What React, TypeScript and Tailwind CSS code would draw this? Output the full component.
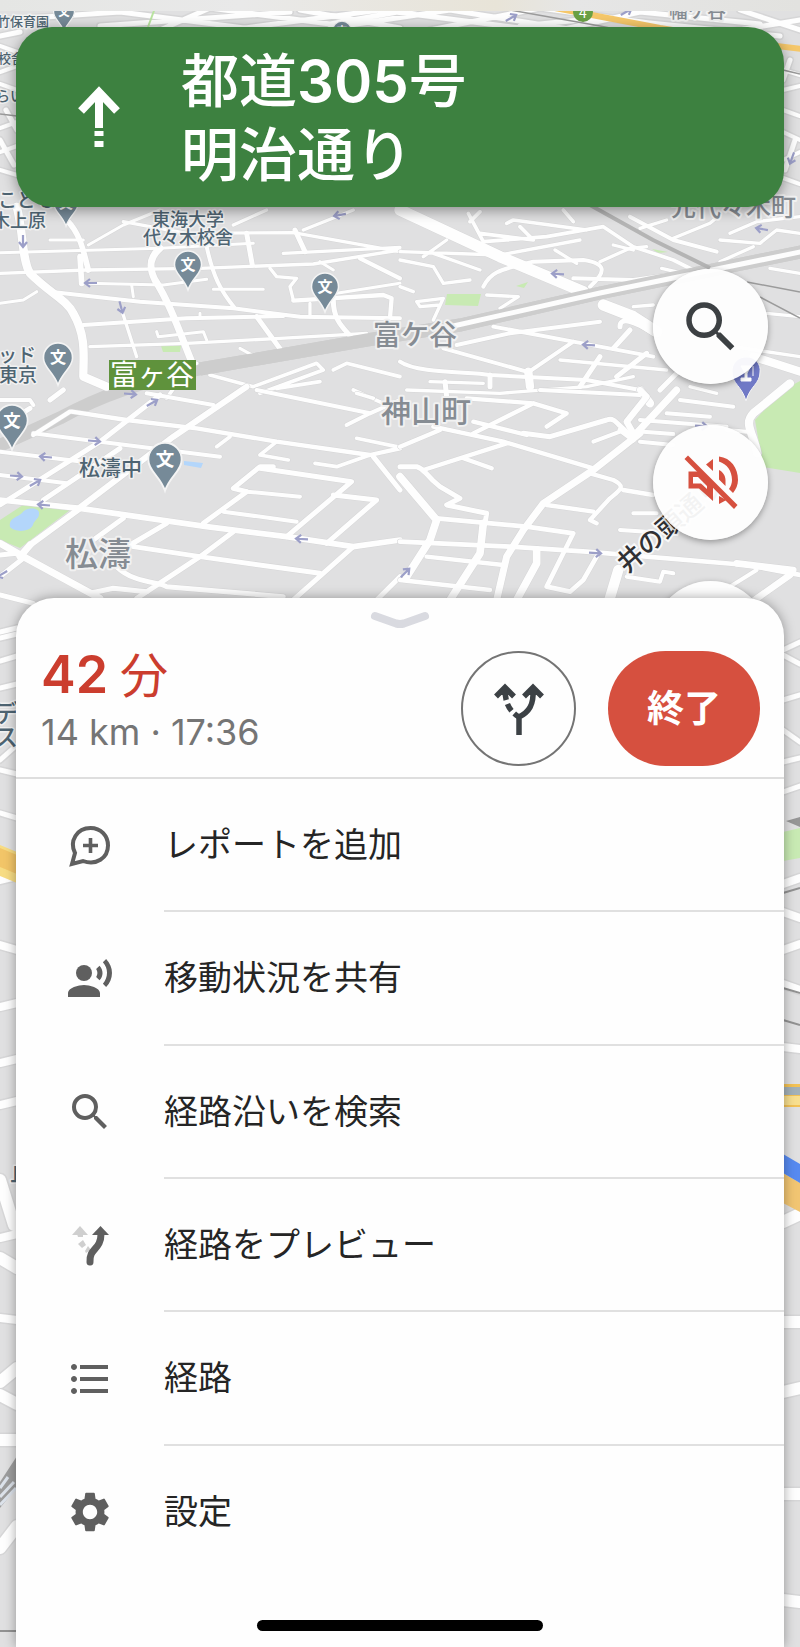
import React from "react";
import {
  MdFormatListBulleted,
  MdRecordVoiceOver,
  MdSearch,
  MdSettings,
} from "react-icons/md";

type Road = [width: number, d: string];

const northWest: Road[] = [
  [25, "M50 50C70 120 65 210 90 250C150 310 200 330 220 370C260 440 250 500 250 560L320 590"],
  [17, "M200 90C240 130 250 180 265 240M240 200L245 280"],
  [21, "M480 175C450 200 445 230 465 270C510 340 540 430 575 515"],
  [9, "M0 188L480 175L760 160M150 150H250M265 165L370 105L480 60M260 280L490 285L620 268"],
  [10, "M0 250L260 240L600 235L940 222L1200 180M270 470L560 460L840 445L1100 430M365 360L410 500"],
  [12, "M150 305L420 335L700 355L900 380L1200 385M620 170C640 260 660 300 705 355M250 405L560 385L850 378"],
  [15, "M740 130L757 225M770 380L850 490M885 120L915 185M1000 330C1000 400 1040 420 1060 450"],
  [10, "M370 95L560 130L880 128L1200 185M700 105L800 60M910 120L1060 60M850 190L1200 172M930 340V380M810 235L830 260L890 265L870 290L880 330"],
  [13, "M1080 205L1200 265M880 332L1150 315L1175 325L1170 385"],
  [9, "M640 298H790M470 425L475 440L610 425L620 450M395 285L400 320M720 475L765 500M600 370V385M1000 240L960 215M1010 310L1200 280M0 340L70 330L110 305"],
  [11, "M630 555L760 590L950 520L970 540L780 610M1000 540L1040 520L1200 560M830 595L960 575M1060 600L1150 640M500 625L560 540M480 540L590 520"],
];

const northEast: Road[] = [
  [34, "M0 60L300 200L550 305M610 345L700 380L770 425"],
  [11, "M205 70L250 155L440 140L610 110L700 170L820 210L880 240M210 95L240 65M240 130L400 150L360 110M320 100L340 90L560 120M490 60L520 95"],
  [10, "M0 185L300 195L540 150M70 200L140 150M100 190L240 240M130 280L210 270M100 230L130 280M0 210L100 230"],
  [12, "M250 290C270 250 290 240 400 215L550 210C620 220 620 245 570 290M520 265L700 270L840 250M690 80L820 150L950 185"],
  [10, "M600 215L690 175L740 170M820 145L930 100L960 75M720 115L800 90M960 150L1080 160L1130 120L1200 130M960 215L1060 170M1110 235L1200 250M990 130L1070 95L1200 80"],
  [10, "M0 290L40 305M60 350L50 335L130 325L100 390M60 350L120 345M260 315L355 320L300 355M785 235L850 250M465 180L530 220M640 165L700 180"],
  [12, "M280 410L520 455L760 500M170 465L330 430L600 395M380 550L520 455M130 475L380 545M0 515C50 550 200 545 270 555L560 570L720 600"],
  [15, "M270 555V590M135 575L140 620M640 475L690 420M660 410C660 380 700 390 760 430M540 590L600 500M650 560L740 490M780 600L830 550"],
  [25, "M385 545L390 590M720 600L750 640M1060 500L1200 545"],
  [10, "M480 510L800 540M20 600L300 610L560 590L700 560M90 575L250 580M1000 470L1200 500M1100 370L1200 380M700 350L760 345M870 590L950 610"],
];

const southWest: Road[] = [
  [17, "M0 330L240 355L620 410L860 440L1060 470L1200 450"],
  [15, "M0 345L300 155L480 15M130 330L360 175M0 110L90 55M150 30L190 0"],
  [18, "M230 360L520 140L740 -10M90 465L240 355"],
  [13, "M215 65L380 90L590 115L830 155L1110 195L1200 175M210 65L100 135"],
  [12, "M100 130L300 155L660 200M0 185L250 215M0 255L200 280M440 10L640 45M0 30H90L100 45"],
  [11, "M690 140L650 170M830 155L780 195L865 210M1110 195L1010 230L945 220M1070 145L1190 170M1070 10L1120 25"],
  [15, "M1120 200L1200 300M820 230H780L700 295L740 305M780 235L1055 275L860 440M1000 315L1130 330L980 460M740 305L610 400"],
  [12, "M740 305L900 320M670 365L890 395M770 0L1110 70L1040 105M1110 70L1200 30"],
  [15, "M370 385L280 450M500 400L390 465M700 425L600 500L410 625M400 470L600 500L960 550M1060 470L880 630M350 530C400 580 480 575 500 590L850 620"],
  [21, "M0 460L70 500L300 625M60 500L90 465"],
  [15, "M70 505L0 560M0 495L50 490M270 610L340 595L440 605M0 615L100 640M1200 560L1130 630"],
];

const southEast: Road[] = [
  [23, "M0 260L110 390L90 450L20 560M250 400L240 490L150 630M410 480V520L350 630"],
  [15, "M0 230H50C80 240 70 250 120 290L180 325L140 345L260 370L255 400"],
  [14, "M110 385L380 410L520 430L490 490L440 590L510 605L550 570L590 500M0 455L330 470L560 485L1040 525L1200 555"],
  [21, "M720 130L580 240L430 340L370 420L320 500L290 630M830 0L700 140"],
  [13, "M80 500L310 525M0 570L270 600M70 240L320 160M100 110L310 155L580 235M120 120L0 170M190 205L275 235M220 130L400 40M200 25L400 40L500 70L440 110M220 95L380 135"],
  [15, "M370 130L450 140L620 90C650 80 650 110 700 140M660 120L700 150"],
  [19, "M720 0L740 20L680 95L700 130"],
  [12, "M420 0L720 15M720 90L980 110M730 125L820 132M720 155L820 165M800 70L930 80M840 30L1000 50M580 155L660 125M980 120L1040 125"],
  [13, "M570 250L640 270C680 290 660 300 630 325L570 390M670 300L760 315M440 345L580 365M570 390L590 400"],
  [31, "M655 540L625 640"],
  [12, "M680 560L780 575L790 545L820 550M990 590L1070 540M700 370H770M660 420L740 425"],
  [20, "M1050 640L1170 555M1010 520L1180 540"],
  [25, "M1170 -20L1060 70C1030 100 1060 130 1072 190"],
];

const topStrip: Road[] = [
  [5, "M0 20L120 12L260 30M100 26L290 12M160 30L210 8L330 24L420 8M230 30L380 10L520 28M330 28L450 10L600 34M430 30L540 8L700 30M520 26L600 18L780 36M640 12L760 24M0 36L20 32M690 38L800 20M740 10L800 30M300 10L400 28M560 30L640 12"],
  [4, "M0 46L17 52M0 72L17 66M0 84L17 90M0 128L17 122M0 152L17 146M0 170L17 175M783 70L800 75M783 90L800 86M783 110L800 116M783 132L800 140M783 160L800 152M783 178L800 184"],
  [5, "M6 110L17 130M0 140L14 165M790 60L783 80M795 140L785 170"],
];

const sides: Road[] = [
  [5, "M0 632L17 628M0 638L17 634M0 661L17 656M0 688L17 684M0 770L17 774M0 813L17 818M0 760L17 745M783 650L800 642M783 655L800 664M783 700L800 695M783 730L800 742M783 762L800 758M783 792L800 786"],
  [8, "M0 945L17 950M0 1007L17 1003M0 1063L17 1059M0 1105L17 1101M0 1238L17 1234M0 1318L17 1320M783 884L800 878M783 912L800 918M783 950L800 944M783 984L800 990M783 1047L800 1049"],
  [12, "M0 1180L14 1225M0 1258L17 1268M0 1382L17 1368M0 1395L17 1404M0 1440H17M0 1548L17 1526M783 1322H800M783 1392L800 1388M783 1494H800M783 1600L800 1602M0 878L17 874M783 1222L800 1214"],
];

function Roads({ roads, transform }: { roads: Road[]; transform?: string }) {
  return (
    <g transform={transform} fill="none" strokeLinejoin="round" strokeLinecap="round">
      {roads.map(([w, d], i) => (
        <path key={`edge${i}`} d={d} stroke="#d6d6d7" strokeWidth={w + 3} />
      ))}
      {roads.map(([w, d], i) => (
        <path key={`road${i}`} d={d} stroke="#fefefe" strokeWidth={w} />
      ))}
    </g>
  );
}

function SchoolPin({ x, y, r = 13 }: { x: number; y: number; r?: number }) {
  return (
    <g transform={`translate(${x} ${y}) scale(${r / 13})`}>
      <path
        d="M0 -14A13.500 13.500 0 0 1 13.500 0C13.500 9 4 13 0 25C-4 13 -13.500 9 -13.500 0A13.500 13.500 0 0 1 0 -14Z"
        fill="#768a98"
        stroke="#f4f4f4"
        strokeWidth="1.500"
      />
      <text y="5" textAnchor="middle" fontSize="15" fontWeight="700" fill="#fff">
        文
      </text>
    </g>
  );
}

const arrows: [number, number, number][] = [
  [340, 215, 170], [23, 241, 90], [91, 283, 180], [121, 307, 75], [130, 394, 5], [152, 403, -30],
  [94, 441, 5], [46, 457, 185], [16, 476, 5], [35, 483, -30], [44, 505, 185], [302, 539, 183],
  [2, 574, 150], [558, 274, 183], [589, 345, 183], [762, 229, 190], [595, 553, 4], [405, 573, -45],
  [701, 426, 4], [792, 158, 110], [511, 18, -30], [626, 12, -30],
];

type Label = [text: string, x: number, y: number, size: number, anchor?: "start" | "middle" | "end"];

const placeLabels: Label[] = [
  ["東海大学", 188, 226, 18, "middle"],
  ["代々木校舎", 188, 244, 18, "middle"],
  ["こども", -2, 207, 19],
  ["木上原", 46, 227, 18, "end"],
  ["ッド", 36, 362, 19, "end"],
  ["東京", 37, 382, 19, "end"],
  ["松濤中", 79, 475, 21],
  ["竹保育園", 49, 26, 13, "end"],
  ["校舎", -2, 63, 13],
  ["らい", -4, 101, 14],
  ["デ", -6, 722, 24],
  ["ス", -6, 746, 24],
  ["止", 10, 1181, 24],
];

const districtLabels: Label[] = [
  ["富ケ谷", 373, 345, 28],
  ["神山町", 381, 422, 30],
  ["松濤", 65, 566, 33],
  ["元代々木町", 671, 216, 25],
  ["幡ケ谷", 669, 18, 19],
];

function MapBackdrop() {
  return (
    <svg
      className="absolute inset-0 h-full w-full font-['Noto_Sans_CJK_JP',sans-serif]"
      viewBox="0 0 800 1647"
      preserveAspectRatio="xMidYMin slice"
      aria-label="地図"
    >
      <defs>
        <linearGradient id="statusHaze">
          <stop offset="0" stopColor="#e5e6e4" />
          <stop offset=".3" stopColor="#e9e9e9" />
          <stop offset=".62" stopColor="#e8e4d8" />
          <stop offset=".72" stopColor="#e6e6e6" />
          <stop offset="1" stopColor="#e2e2df" />
        </linearGradient>
      </defs>
      <rect width="800" height="1647" fill="#e0e0e1" />

      <g fill="#c8eab3">
        <path d="M161 346L181 345L180 352H163Z" />
        <path d="M447 294L481 294L478 306L445 305ZM516 286L528 282L524 288ZM652 249L668 252L658 253Z" />
        <path d="M0 520L23 505L70 510L20 548L0 540Z" />
        <path d="M755 420L783 390L800 381V473L763 467Z" />
        <path d="M783 832L800 828V858L783 861Z" />
      </g>
      <path d="M10 527C8 518 18 517 22 513C26 507 40 507 39 514C39 519 34 520 33 525C29 533 14 532 10 527ZM184 461L203 463L201 468L184 465Z" fill="#b3d6fb" />

      <path d="M-10 450L60 418Q120 385 200 369L367 340L460 325L600 293L810 250" fill="none" stroke="#cdcdcd" strokeWidth="13" />
      <Roads roads={northWest} transform="translate(0 190) scale(.3333)" />
      <Roads roads={northEast} transform="translate(400 190) scale(.3333)" />
      <Roads roads={southWest} transform="translate(0 390) scale(.3333)" />
      <Roads roads={southEast} transform="translate(400 390) scale(.3333)" />
      <Roads roads={topStrip} />
      <Roads roads={sides} />

      <g fill="none">
        <path d="M200 369L367 340L460 325L600 293L810 250" stroke="#cdcdcd" strokeWidth="13" />
        <path d="M440 329L600 293L810 250" stroke="#fdfdfd" strokeWidth="5" />
        <path d="M590 205L653 240L710 268" stroke="#b4b4b4" strokeWidth="4" />
        <path d="M747 282L800 292M760 297L800 318M510 10L600 26L650 36M0 114L17 116M783 70L800 74" stroke="#9b9b9b" strokeWidth="1.500" />
        <path d="M555 8L660 28L760 44L810 50" stroke="#f5c76a" strokeWidth="6" />
        <path d="M155 8L148 27" stroke="#b9e3a0" strokeWidth="2" />
        <path d="M783 893L800 888M783 988L800 993M783 1020L800 1025M0 1631H17" stroke="#929292" strokeWidth="2" />
      </g>
      <path d="M0 845L17 852V883L0 876Z" fill="#f7dc83" />
      <path d="M0 848L17 855V874L0 867Z" fill="#f2c568" />
      <path d="M0 1482L17 1456V1487L0 1508Z" fill="#9d9d9d" />
      <path d="M0 1488L8 1477M0 1497L14 1482M0 1505L16 1488" stroke="#dce2ea" strokeWidth="3" />
      <path d="M786 821L800 817V827Z" fill="#969696" />
      <path d="M783 1084H800V1107H783Z" fill="#f3c255" />
      <path d="M783 1087H800V1095H783Z" fill="#a3b1b9" />
      <path d="M783 1096H800V1105H783Z" fill="#f8df8f" />
      <path d="M783 1173L800 1183V1212L783 1203Z" fill="#f1c572" />
      <path d="M783 1154L800 1164V1183L783 1173Z" fill="#578af0" />

      {arrows.map(([x, y, a], i) => (
        <path
          key={i}
          transform={`translate(${x} ${y}) rotate(${a})`}
          d="M-6 0H5M1 -4L6 0L1 4"
          fill="none"
          stroke="#9c9fc8"
          strokeWidth="2.200"
        />
      ))}

      <SchoolPin x={64} y={12} r={10} />
      <SchoolPin x={342} y={31} r={9} />
      <SchoolPin x={66} y={203} r={12} />
      <SchoolPin x={188} y={265} />
      <SchoolPin x={325} y={287} />
      <SchoolPin x={58} y={358} r={14} />
      <SchoolPin x={12} y={421} r={15} />
      <SchoolPin x={165} y={460} r={16} />
      <path d="M747 357A13 13 0 0 1 760 372C760 384 750 386 746 401C742 386 732 384 732 372A14 14 0 0 1 747 357Z" fill="#7079c6" stroke="#f4f4f4" />
      <path d="M741 366H751L747 373V378H751V381H741V378H745V373ZM753 366V376" fill="#fff" stroke="#fff" />
      <circle cx="583" cy="12" r="10" fill="#69a044" />
      <text x="583" y="18" textAnchor="middle" fontSize="14" fill="#fff">4</text>

      <g fontWeight="500" fill="#4e6472" stroke="#f1f1f1" strokeWidth="3" strokeLinejoin="round" paintOrder="stroke">
        {placeLabels.map(([t, x, y, s, a]) => (
          <text key={t} x={x} y={y} fontSize={s} textAnchor={a}>{t}</text>
        ))}
      </g>
      <g fontWeight="500" fill="#868c93" stroke="#f1f1f1" strokeWidth="4" strokeLinejoin="round" paintOrder="stroke">
        {districtLabels.map(([t, x, y, s, a]) => (
          <text key={t} x={x} y={y} fontSize={s} textAnchor={a}>{t}</text>
        ))}
      </g>
      <rect x="109" y="360" width="87" height="30" fill="#5f923c" />
      <text x="152" y="385" textAnchor="middle" fontSize="28" fill="#fff">富ヶ谷</text>
      <text
        transform="translate(627 574) rotate(-41)"
        fontSize="26"
        fontWeight="500"
        fill="#303134"
        stroke="#f8f8f8"
        strokeWidth="4"
        paintOrder="stroke"
      >
        井の頭通り
      </text>
      <rect width="800" height="11" fill="url(#statusHaze)" />
    </svg>
  );
}

function StraightArrow() {
  return (
    <svg className="h-16 w-12" viewBox="0 0 48 64" fill="none" stroke="#fff" aria-hidden="true">
      <path d="M24 42V8M6 25L24 6L42 25" strokeWidth="8" />
      <path d="M24 45V50M24 55V61" strokeWidth="9" />
    </svg>
  );
}

function MutedIcon() {
  return (
    <svg className="h-14 w-14" viewBox="0 0 56 56" fill="#d6503f" aria-hidden="true">
      <path fillRule="evenodd" d="M5.500 16.500H16L30 30V46L16 33.500H5.500ZM10 22V28.500H18L24 34V31L15 22Z" />
      <path d="M30 4V16L23 9.500ZM36 15C40 17 42.500 21 42.500 25V31L36 24.500Z" />
      <path d="M36 1.500C48 3 55 13 55 25C55 30 53 34 50 38L46 34C48 31 49 28 49 25C49 16 44 9 36 6.500ZM36 41L43.500 45L36 49Z" />
      <path d="M1.500 4L5 .500L54.500 50L51 54Z" />
    </svg>
  );
}

function AlternateRoutesIcon() {
  return (
    <svg className="h-14 w-14" viewBox="0 0 56 56" fill="none" stroke="#3c4145" aria-hidden="true">
      <path d="M28 54V36C38 31 43 24 42 8" strokeWidth="5.500" />
      <path d="M14 8C14 24 20 31 28 36" strokeWidth="5.500" strokeDasharray="11 4 8 4 9 0" />
      <path d="M5 15.500L14 6.500L23 15.500M33 15.500L42 6.500L51 15.500" strokeWidth="5.500" />
      <path d="M14 5L22 14H6ZM42 5L50 14H34Z" fill="#3c4145" stroke="none" />
    </svg>
  );
}

function AddReportIcon() {
  return (
    <svg className="h-12 w-12" viewBox="0 0 48 48" fill="none" stroke="currentColor" aria-hidden="true">
      <path d="M6 42L9 31C3 19 11 6 24.500 6C35 6 42 14 42 23.500C42 36 30 44 17 39Z" strokeWidth="4" />
      <path d="M24.500 16V31M17 23.500H32" strokeWidth="3.600" />
    </svg>
  );
}

function PreviewIcon() {
  return (
    <svg className="h-12 w-12" viewBox="0 0 48 48" fill="none" aria-hidden="true">
      <path d="M14 4L22 13H6Z" fill="#cfcfcf" />
      <path d="M11 12H17V15H12ZM12 22L17 18L20 23L16 26ZM19 29L22 24L25 28L20 31Z" fill="#cfcfcf" />
      <path d="M24 40C23 26 35 28 35 12" stroke="currentColor" strokeWidth="7" strokeLinecap="round" />
      <path d="M34.500 4L43 13H26Z" fill="currentColor" />
    </svg>
  );
}

const menu = [
  { label: "レポートを追加", icon: <AddReportIcon /> },
  { label: "移動状況を共有", icon: <MdRecordVoiceOver size={48} /> },
  { label: "経路沿いを検索", icon: <MdSearch size={48} /> },
  { label: "経路をプレビュー", icon: <PreviewIcon /> },
  { label: "経路", icon: <MdFormatListBulleted size={48} /> },
  { label: "設定", icon: <MdSettings size={48} /> },
];

const fab =
  "flex h-[115px] w-[115px] shrink-0 items-center justify-center rounded-full bg-[#fefefe]/95 shadow-[0_2px_6px_rgba(0,0,0,0.35)]";

export default function App() {
  return (
    <div className="relative flex min-h-screen flex-col overflow-hidden bg-[#e0e0e1] px-4 pt-[27px] font-['Inter','Noto_Sans_CJK_JP',sans-serif]" lang="ja">
      <MapBackdrop />

      <header className="relative flex items-center rounded-[36px] bg-[#3d8140] pt-[17px] pb-[15px] text-white shadow-[0_3px_14px_rgba(0,0,0,0.4)]">
        <div className="flex w-[165px] justify-center">
          <StraightArrow />
        </div>
        <h1 className="text-[58px] leading-[74px] font-medium">
          都道<span className="font-semibold">305</span>号
          <br />
          明治通り
        </h1>
      </header>

      <div className="relative flex h-[391px] flex-col items-end gap-[41px] pt-[62px] pr-4">
        <button type="button" aria-label="検索" className={fab}>
          <MdSearch size={66} color="#3c4043" />
        </button>
        <button type="button" aria-label="ミュート" className={fab}>
          <MutedIcon />
        </button>
        <button type="button" aria-label="現在地" className={fab} />
      </div>

      <main className="relative flex grow flex-col rounded-t-[38px] bg-[#fefefe] shadow-[0_0_12px_rgba(0,0,0,0.35)]">
        <section className="flex flex-col border-b-2 border-[#dedede] pb-[11px]">
          <button type="button" aria-label="メニューを閉じる" className="mx-auto flex h-[53px] items-start pt-3">
            <svg className="h-5 w-16" viewBox="0 0 64 20" fill="none" aria-hidden="true">
              <path d="M7 6L28 13.500Q32 14.500 36 13.500L57 6" stroke="#d9dae0" strokeWidth="8" strokeLinecap="round" />
            </svg>
          </button>
          <div className="flex items-start pr-6 pl-[25px]">
            <div className="grow">
              <p className="flex items-baseline gap-3 text-[52px] leading-[48px] font-semibold text-[#cb3d2e]">
                42<span className="text-[48px] font-normal">分</span>
              </p>
              <p className="text-[36px] leading-[64px] text-[#757575]">14 km · 17:36</p>
            </div>
            <button type="button" aria-label="別の経路" className="mr-8 flex h-[115px] w-[115px] items-center justify-center rounded-full border-2 border-[#747474]">
              <AlternateRoutesIcon />
            </button>
            <button type="button" className="h-[115px] w-[152px] rounded-full bg-[#d6503f] text-[37px] font-bold text-white">
              終了
            </button>
          </div>
        </section>

        <ul className="flex h-[800px] flex-col">
          {menu.map(({ label, icon }) => (
            <li key={label} className="group flex-1">
              <button type="button" className="flex h-full w-full items-center pl-[50px] text-left text-[#5f5f5f]">
                {icon}
                <span className="ml-[50px] flex h-full grow items-center border-b-2 border-[#e0e0e0] text-[34px] text-[#252525] group-last:border-transparent">
                  {label}
                </span>
              </button>
            </li>
          ))}
        </ul>

        <div className="mx-auto mt-auto mb-4 h-[11px] w-[286px] rounded-full bg-black" />
      </main>
    </div>
  );
}
